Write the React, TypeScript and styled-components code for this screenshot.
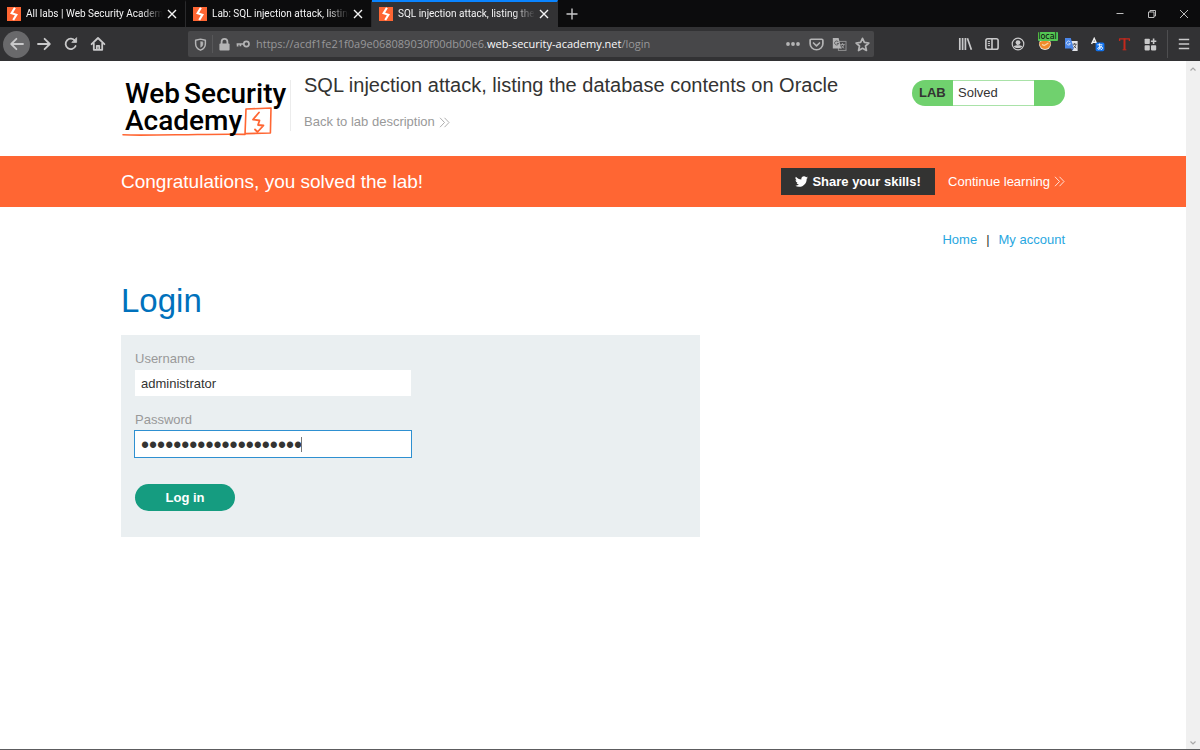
import React, { useState } from "react";
import styled, { createGlobalStyle } from "styled-components";

const GlobalStyle = createGlobalStyle`
  * { box-sizing: border-box; }
  body { margin: 0; background: #fff; font-family: "Liberation Sans", Arial, sans-serif; color: #333332; }
  button { border: 0; padding: 0; background: none; color: inherit; font: inherit; cursor: pointer; }
  a { text-decoration: none; }
  svg { display: block; flex: none; }
`;

const Window = styled.div`
  display: flex;
  flex-direction: column;
  min-height: 100vh;
  border-bottom: 1px solid #5c5c5e;
`;

/* ---------- browser chrome ---------- */

const TabStrip = styled.header`
  display: flex;
  height: 27px;
  background: #0c0c0d;
  color: #f4f4f5;
`;

const Tab = styled.div<{ $active?: boolean }>`
  display: flex;
  align-items: center;
  width: 186px;
  padding: 0 4px 1px 7px;
  border-top: 2px solid ${(p) => (p.$active ? "#0a84ff" : "transparent")};
  border-right: 1px solid ${(p) => (p.$active ? "#323234" : "#2a2a2c")};
  background: ${(p) => (p.$active ? "#323234" : "transparent")};
`;

const TabTitle = styled.span`
  flex: 1;
  min-width: 0;
  margin-left: 5px;
  overflow: hidden;
  white-space: nowrap;
  font: 10px/16px Roboto, "Noto Sans", sans-serif;
  mask-image: linear-gradient(to right, #000 84%, transparent);
`;

const TabClose = styled.button`
  display: flex;
  justify-content: center;
  width: 18px;
`;

const NewTab = styled.button`
  display: flex;
  align-items: center;
  justify-content: center;
  width: 27px;
  color: #c9c9ca;
`;

const WindowControls = styled.div`
  display: flex;
  margin-left: auto;
`;

const WindowButton = styled.button`
  display: flex;
  align-items: center;
  justify-content: center;
  width: 32px;
  color: #bdbdbd;
`;

const Toolbar = styled.nav`
  display: flex;
  align-items: center;
  height: 34px;
  padding: 0 1px 0 3px;
  background: #323234;
  color: #c9c9ca;
`;

const NavButton = styled.button<{ $round?: boolean }>`
  display: flex;
  align-items: center;
  justify-content: center;
  width: 27px;
  height: 27px;
  border-radius: 50%;
  background: ${(p) => (p.$round ? "#69696b" : "transparent")};
`;

const AddressBar = styled.div`
  display: flex;
  flex: 1;
  align-items: center;
  min-width: 0;
  height: 26px;
  margin: 0 78px 0 77px;
  padding: 0 4px 0 6px;
  border-radius: 2px;
  background: #474749;
  color: #b4b4b5;
`;

const SiteInfo = styled.div`
  display: flex;
  align-items: center;
  gap: 5px;
`;

const Divider = styled.span`
  width: 1px;
  height: 18px;
  background: #58585a;
`;

const Address = styled.div`
  flex: 1;
  min-width: 0;
  margin-left: 6px;
  overflow: hidden;
  white-space: nowrap;
  font: 11px/18px "Open Sans", "Noto Sans", sans-serif;
  color: #98989a;
`;

const Domain = styled.span`
  color: #f9f9fa;
`;

const PageActions = styled.div`
  display: flex;
  gap: 8px;
`;

const IconButton = styled.button`
  display: flex;
  align-items: center;
  justify-content: center;
`;

const Extensions = styled.div`
  display: flex;
  width: 212px;
  margin-right: 3px;
`;

const ExtensionButton = styled.button`
  position: relative;
  display: flex;
  flex: 1;
  align-items: center;
  justify-content: center;
  height: 26px;
`;

const ExtensionBadge = styled.span`
  position: absolute;
  top: 1px;
  left: 6px;
  width: 20px;
  border-radius: 1px;
  background: #53c653;
  color: #0c0c0d;
  font: 8px/9px "DejaVu Sans", sans-serif;
`;

const ToolbarDivider = styled(Divider)`
  height: 28px;
  background: #4e4e50;
`;

const MenuButton = styled(IconButton)`
  width: 30px;
  height: 26px;
  margin-left: 1px;
`;

/* ---------- page ---------- */

const Viewport = styled.div`
  display: flex;
  flex: 1;
`;

const Page = styled.div`
  flex: 1;
  min-width: 0;
`;

const ScrollTrack = styled.div`
  display: flex;
  flex-direction: column;
  justify-content: space-between;
  align-items: center;
  width: 14px;
  padding: 6px 0 4px;
  background: #f0f0f0;
  color: #a9a9a9;
`;

const Container = styled.div`
  display: flex;
  max-width: 944px;
  margin: 0 auto;
`;

const LabHeader = styled(Container)`
  align-items: flex-start;
  height: 95px;
  padding-top: 19px;
`;

const Logo = styled.a`
  position: relative;
  width: 170px;
  height: 51px;
  padding-left: 4px;
  border-right: 1px solid #ececec;
  color: #000;
  font: 500 28px/27px Roboto, sans-serif;
  white-space: nowrap;
`;

const LogoLine = styled.span`
  position: relative;
  display: flex;
  gap: 4px;
`;

const LogoMark = styled.svg`
  position: absolute;
  top: 26px;
  left: 0;
`;

const TitleBlock = styled.div`
  flex: 1;
  margin-left: 13px;
`;

const LabTitle = styled.h2`
  margin: 0;
  font-size: 20px;
  line-height: 10px;
  font-weight: 400;
`;

const BackLink = styled.a`
  display: inline-flex;
  align-items: center;
  gap: 4px;
  margin-top: 24px;
  color: #999;
  font-size: 13px;
  line-height: 16px;
`;

const LabStatus = styled.div`
  display: flex;
  width: 153px;
  height: 26px;
  overflow: hidden;
  border-radius: 13px;
  background: #70d16e;
  font-size: 13px;
  line-height: 26px;
`;

const StatusLabel = styled.strong`
  width: 41px;
  padding-left: 7px;
  font-size: 13px;
`;

const StatusValue = styled.span`
  width: 81px;
  padding-left: 5px;
  border: solid #a9e2a8;
  border-width: 1px 0;
  background: #fff;
  line-height: 24px;
`;

const Banner = styled.section`
  background: #ff6633;
  color: #fff;
`;

const BannerRow = styled(Container)`
  align-items: center;
  height: 51px;
`;

const BannerTitle = styled.h4`
  flex: 1;
  margin: 0;
  font-size: 19px;
  font-weight: 400;
`;

const ShareButton = styled.button`
  display: flex;
  align-items: center;
  justify-content: center;
  gap: 4px;
  width: 154px;
  height: 27px;
  margin-right: 13px;
  background: #333332;
  font-size: 13px;
  font-weight: 700;
`;

const ContinueLink = styled.a`
  display: flex;
  align-items: center;
  gap: 4px;
  color: #fff;
  font-size: 13px;
`;

const AccountNav = styled(Container)`
  justify-content: flex-end;
  gap: 9px;
  padding-top: 25px;
  font-size: 13px;
  line-height: 16px;
`;

const AccountLink = styled.a`
  color: #29a7df;
`;

const Main = styled(Container)`
  flex-direction: column;
  padding-top: 32px;
`;

const Heading = styled.h1`
  margin: 0 0 13px;
  color: #0071bc;
  font-size: 33px;
  line-height: 42px;
  font-weight: 400;
`;

const LoginForm = styled.form`
  display: flex;
  flex-direction: column;
  align-items: flex-start;
  width: 579px;
  max-width: 100%;
  padding: 16px 14px 26px;
  background: #eaeff1;
`;

const Label = styled.label`
  margin-bottom: 2px;
  color: #999;
  font-size: 13px;
  line-height: 16px;
`;

const Field = styled.div`
  position: relative;
  display: flex;
  margin: 0 -1px 15px;
`;

const TextInput = styled.input`
  width: 278px;
  height: 28px;
  padding: 0 6px;
  border: 1px solid #eaeff1;
  outline: 0;
  background: #fff;
  color: #333332;
  font: 13px "Liberation Sans", Arial, sans-serif;
`;

const PasswordInput = styled(TextInput)`
  padding-top: 2px;
  border-color: #2e90d1;
  font-size: 23px;
  caret-color: transparent;
`;

const Caret = styled.span`
  position: absolute;
  top: 7px;
  left: 167px;
  width: 1px;
  height: 15px;
  background: #777;
`;

const LoginButton = styled.button`
  width: 100px;
  height: 27px;
  margin-top: 11px;
  border-radius: 14px;
  background: #159c80;
  color: #fff;
  font-size: 13px;
  font-weight: 700;
`;

/* ---------- drawings ---------- */

const Favicon = () => (
  <svg width="14" height="14" viewBox="0 0 14 14">
    <rect width="14" height="14" fill="#ff6633" />
    <path d="M7.9 0.8 L4.6 6.2 L9.4 7.8 L6.2 13" fill="none" stroke="#fff" strokeWidth="2.1" />
  </svg>
);

const Cross = ({ size, width }: { size: number; width: number }) => (
  <svg width={size} height={size} viewBox="0 0 10 10" fill="none" stroke="currentColor" strokeWidth={width}>
    <path d="M1 1 L9 9 M9 1 L1 9" />
  </svg>
);

const Line = ({ size = 16, children }: { size?: number; children: React.ReactNode }) => (
  <svg
    width={size}
    height={size}
    viewBox="0 0 16 16"
    fill="none"
    stroke="currentColor"
    strokeWidth="1.8"
    strokeLinecap="round"
    strokeLinejoin="round"
  >
    {children}
  </svg>
);

const Chevrons = () => (
  <svg width="11" height="11" viewBox="0 0 11 11" fill="none" stroke="currentColor" strokeWidth="0.8">
    <path d="M1 0.8 L5.5 5.5 L1 10.2 M5.5 0.8 L10 5.5 L5.5 10.2" />
  </svg>
);

const Bird = () => (
  <svg width="13" height="13" viewBox="0 0 24 24" fill="currentColor">
    <path d="M23.95 4.57a10 10 0 0 1-2.82.77 4.96 4.96 0 0 0 2.16-2.72c-.95.55-2 .95-3.13 1.18a4.92 4.92 0 0 0-8.38 4.48C7.69 8.09 4.07 6.13 1.64 3.16a4.93 4.93 0 0 0 1.52 6.57 4.9 4.9 0 0 1-2.23-.61v.06a4.92 4.92 0 0 0 3.95 4.83 5 5 0 0 1-2.21.08 4.94 4.94 0 0 0 4.6 3.42A9.87 9.87 0 0 1 0 19.54a14 14 0 0 0 7.55 2.21c9.05 0 14-7.5 14-13.98 0-.21 0-.42-.02-.63a9.94 9.94 0 0 0 2.46-2.55z" />
  </svg>
);

const ShieldIcon = () => (
  <Line size={13}>
    <path d="M8 1.4 L14 2.8 V7 C14 11 11.5 13.6 8 15 C4.5 13.6 2 11 2 7 V2.8 Z" />
    <path d="M8.2 4.6 V11.4 C10 10.6 11 9 11 7 V5.2 Z" fill="currentColor" strokeWidth="0.6" />
  </Line>
);

const LockIcon = () => (
  <svg width="13" height="13" viewBox="0 0 13 13" fill="currentColor">
    <path d="M3.6 6 V3.8 a2.9 2.9 0 0 1 5.8 0 V6" fill="none" stroke="currentColor" strokeWidth="1.8" />
    <rect x="1.4" y="5.4" width="10.2" height="7.2" rx="1" />
  </svg>
);

const KeyIcon = () => (
  <svg width="14" height="10" viewBox="0 0 14 10" fill="none" stroke="currentColor" strokeWidth="1.7">
    <circle cx="10.4" cy="5" r="2.6" />
    <path d="M7.8 5 H0.6 M1.6 5 V7.4 M4.4 5 V7.2" />
  </svg>
);

const TranslateIcon = () => (
  <svg width="15" height="15" viewBox="0 0 15 15">
    <rect x="6.4" y="4.4" width="7.6" height="9" fill="none" stroke="#8f8f91" />
    <path d="M8.4 7.4 H12.6 M10.5 6.2 V7.4 M12 7.4 C11.6 9.4 10.4 10.6 8.8 11.4 M9.2 8.6 L12.2 11.4" fill="none" stroke="#a9a9aa" strokeWidth="0.9" />
    <path d="M0.8 1 H6.6 L9.2 11.4 H0.8 Z" fill="#b4b4b5" />
    <path d="M6.4 5 A2 2 0 1 0 6.6 6.4 H4.8" fill="none" stroke="#5a5a5c" />
  </svg>
);

const LibraryIcon = () => (
  <svg width="15" height="14" viewBox="0 0 15 14" fill="none" stroke="currentColor" strokeWidth="1.7">
    <path d="M1.8 1 V13 M4.6 1 V13 M7.4 1 V13 M9.4 1.2 L13.4 12.8" />
  </svg>
);

const SidebarIcon = () => (
  <svg width="14" height="14" viewBox="0 0 14 14" fill="none" stroke="currentColor" strokeWidth="1.6">
    <rect x="0.9" y="1.7" width="12.2" height="10.6" rx="1.8" />
    <path d="M7 1.7 V12.3" />
    <path d="M2.8 4.6 H5 M2.8 6.6 H5 M2.8 8.6 H5" strokeWidth="1" />
  </svg>
);

const ProfileIcon = () => (
  <svg width="14" height="14" viewBox="0 0 14 14" fill="none" stroke="currentColor" strokeWidth="1.2">
    <circle cx="7" cy="7" r="5.8" />
    <circle cx="7" cy="5.6" r="2.4" fill="currentColor" stroke="none" />
    <path d="M2.8 9.4 C4.4 8 9.6 8 11.2 9.4 C9.8 11.6 4.2 11.6 2.8 9.4 Z" fill="currentColor" stroke="none" />
  </svg>
);

const FoxIcon = () => (
  <svg width="14" height="14" viewBox="0 0 14 14">
    <circle cx="7" cy="7" r="6" fill="#e8e2d8" />
    <path d="M1.2 6 C3 3 11 3 12.8 6 C12.4 9 10 12 7 12 C4 12 1.6 9 1.2 6 Z" fill="#ef8a2b" />
    <path d="M4 7.4 L6.2 8.6 L10.4 6" fill="none" stroke="#f9d3a2" strokeWidth="1.2" />
  </svg>
);

const GoogleTranslateIcon = () => (
  <svg width="15" height="15" viewBox="0 0 15 15">
    <path d="M5 4 H13.6 V14 H8.4 Z" fill="#e3e4e8" />
    <path d="M8.4 7.2 H12.6 M10.6 6 V7.2 M12 7.2 C11.4 9.4 10.6 10.2 9.2 11 M9.6 8.6 L12.2 11.2" fill="none" stroke="#55565c" />
    <path d="M1 1 H6.8 L9.6 11.4 H1 Z" fill="#4a86e8" />
    <path d="M6.2 5 A2 2 0 1 0 6.4 6.6 H4.6" fill="none" stroke="#cfe0fb" strokeWidth="0.9" />
    <path d="M7.2 11.4 H9.6 L8.6 13.6 Z" fill="#2b5bb8" />
  </svg>
);

const PageTranslateIcon = () => (
  <svg width="15" height="15" viewBox="0 0 15 15">
    <path d="M1.6 7 L4.2 1.4 L6.8 7 M2.6 5.2 H5.8" fill="none" stroke="#f0f0f0" strokeWidth="1.4" />
    <rect x="5.6" y="5.4" width="8.8" height="8.8" rx="1.6" fill="#1273ee" />
    <path d="M7.4 7.8 H12.4 M9.6 6.4 C9.4 9 9.6 10.6 10.2 12.4 M11.6 8.8 C10.8 11 9.4 12.6 8 12.2 C6.8 11 10 8.8 12 10 C13.2 11 12.4 12.4 11 12.6" fill="none" stroke="#fff" strokeWidth="0.9" />
  </svg>
);

const LetterTIcon = () => (
  <svg width="13" height="14" viewBox="0 0 13 14" fill="none" stroke="#c5281c">
    <path d="M1.4 1.8 H11.6 M1.6 1.4 V4 M11.4 1.4 V4" strokeWidth="1.3" />
    <path d="M6.5 1.4 V12.8" strokeWidth="2" />
    <path d="M4.6 12.8 H8.4" strokeWidth="1" />
  </svg>
);

const AddonsIcon = () => (
  <svg width="13" height="13" viewBox="0 0 13 13" fill="currentColor">
    <rect x="0.6" y="0.8" width="5.2" height="5.2" rx="0.8" />
    <rect x="0.6" y="7.2" width="5.2" height="5.2" rx="0.8" />
    <rect x="7" y="7.2" width="5.2" height="5.2" rx="0.8" />
    <path d="M9.6 0.6 V6 M6.9 3.3 H12.3" stroke="currentColor" strokeWidth="1.6" />
  </svg>
);

const tabs = [
  "All labs | Web Security Academy",
  "Lab: SQL injection attack, listing the",
  "SQL injection attack, listing the database",
];

const extensions = [
  { name: "Library", icon: <LibraryIcon /> },
  { name: "Sidebars", icon: <SidebarIcon /> },
  { name: "Account", icon: <ProfileIcon /> },
  { name: "Proxy", icon: <FoxIcon />, badge: "local" },
  { name: "Translate", icon: <GoogleTranslateIcon /> },
  { name: "Translate page", icon: <PageTranslateIcon /> },
  { name: "Text tool", icon: <LetterTIcon /> },
  { name: "Add-ons", icon: <AddonsIcon /> },
];

export default function App() {
  const [username, setUsername] = useState("administrator");
  const [password, setPassword] = useState("x".repeat(20));

  return (
    <Window>
      <GlobalStyle />
      <TabStrip>
        {tabs.map((title, i) => (
          <Tab key={title} $active={i === 2}>
            <Favicon />
            <TabTitle>{title}</TabTitle>
            <TabClose aria-label="Close tab">
              <Cross size={10} width={1.4} />
            </TabClose>
          </Tab>
        ))}
        <NewTab aria-label="New tab">
          <svg width="12" height="12" viewBox="0 0 12 12" stroke="currentColor" strokeWidth="1.4">
            <path d="M6 0.5 V11.5 M0.5 6 H11.5" />
          </svg>
        </NewTab>
        <WindowControls>
          <WindowButton aria-label="Minimize">
            <svg width="8" height="8" viewBox="0 0 8 8" stroke="currentColor">
              <path d="M0.5 3.5 H7.5" />
            </svg>
          </WindowButton>
          <WindowButton aria-label="Restore">
            <svg width="8" height="8" viewBox="0 0 8 8" fill="none" stroke="currentColor">
              <path d="M0.5 2 H6 V7.5 H0.5 Z M2 2 V0.5 H7.5 V6 H6" />
            </svg>
          </WindowButton>
          <WindowButton aria-label="Close">
            <Cross size={10} width={1} />
          </WindowButton>
        </WindowControls>
      </TabStrip>

      <Toolbar aria-label="Browser toolbar">
        <NavButton $round aria-label="Back">
          <Line><path d="M14 8 H2.4 M7.4 2.8 L2.2 8 L7.4 13.2" /></Line>
        </NavButton>
        <NavButton aria-label="Forward">
          <Line><path d="M2 8 H13.6 M8.6 2.8 L13.8 8 L8.6 13.2" /></Line>
        </NavButton>
        <NavButton aria-label="Reload">
          <Line>
            <path d="M12.6 10 A5.2 5.2 0 1 1 12 4.8" />
            <path d="M13.6 2 V6.4 H9.2 Z" fill="currentColor" strokeWidth="0.8" />
          </Line>
        </NavButton>
        <NavButton aria-label="Home">
          <Line>
            <path d="M1.6 8.2 L8 2 L14.4 8.2" />
            <path d="M3.8 7.4 V13.8 H12.2 V7.4 M6.8 13.6 V9.8 H9.2 V13.6" />
          </Line>
        </NavButton>

        <AddressBar>
          <SiteInfo>
            <ShieldIcon />
            <Divider />
            <LockIcon />
            <KeyIcon />
          </SiteInfo>
          <Address role="textbox" aria-label="Address">
            https://acdf1fe21f0a9e068089030f00db00e6.<Domain>web-security-academy.net</Domain>/login
          </Address>
          <PageActions>
            <IconButton aria-label="Page actions">
              <svg width="16" height="16" viewBox="0 0 16 16" fill="currentColor">
                <circle cx="3" cy="8" r="1.9" />
                <circle cx="8" cy="8" r="1.9" />
                <circle cx="13" cy="8" r="1.9" />
              </svg>
            </IconButton>
            <IconButton aria-label="Save to Pocket">
              <Line size={15}>
                <path d="M2.4 2.4 H13.6 Q14.8 2.4 14.8 3.6 V7.2 A6.8 6.4 0 0 1 1.2 7.2 V3.6 Q1.2 2.4 2.4 2.4 Z" />
                <path d="M4.8 6.4 L8 9.4 L11.2 6.4" />
              </Line>
            </IconButton>
            <IconButton aria-label="Translate this page">
              <TranslateIcon />
            </IconButton>
            <IconButton aria-label="Bookmark">
              <Line size={15}>
                <path d="M8 1.4 L10 5.8 L14.8 6.4 L11.2 9.6 L12.2 14.4 L8 12 L3.8 14.4 L4.8 9.6 L1.2 6.4 L6 5.8 Z" />
              </Line>
            </IconButton>
          </PageActions>
        </AddressBar>

        <Extensions>
          {extensions.map((e) => (
            <ExtensionButton key={e.name} aria-label={e.name}>
              {e.icon}
              {e.badge && <ExtensionBadge>{e.badge}</ExtensionBadge>}
            </ExtensionButton>
          ))}
        </Extensions>
        <ToolbarDivider />
        <MenuButton aria-label="Menu">
          <svg width="12" height="12" viewBox="0 0 12 12" stroke="currentColor" strokeWidth="1.5">
            <path d="M0.8 1.5 H11.2 M0.8 6 H11.2 M0.8 10.5 H11.2" />
          </svg>
        </MenuButton>
      </Toolbar>

      <Viewport>
        <Page>
          <LabHeader as="header">
            <Logo href="#">
              <LogoMark width="152" height="32" viewBox="0 0 152 32" fill="none" stroke="#ff6633" strokeLinecap="round" strokeLinejoin="round">
                <path d="M2 28.8 C20 29.6 40 28.6 60 28.8 C80 28.6 100 28 124 28.4 L125 3 L150 2 L149.4 27 L125 27.6" strokeWidth="1.6" />
                <path d="M138 6.5 L132 13.5 L138.5 14.5 L137 19 L142.5 19.5 L136.5 26 L134 23.5" strokeWidth="1.8" />
              </LogoMark>
              <LogoLine>
                <span>Web</span>
                <span>Security</span>
              </LogoLine>
              <LogoLine>Academy</LogoLine>
            </Logo>
            <TitleBlock>
              <LabTitle>SQL injection attack, listing the database contents on Oracle</LabTitle>
              <BackLink href="#">
                Back to lab description <Chevrons />
              </BackLink>
            </TitleBlock>
            <LabStatus>
              <StatusLabel>LAB</StatusLabel>
              <StatusValue>Solved</StatusValue>
            </LabStatus>
          </LabHeader>

          <Banner>
            <BannerRow>
              <BannerTitle>Congratulations, you solved the lab!</BannerTitle>
              <ShareButton>
                <Bird /> Share your skills!
              </ShareButton>
              <ContinueLink href="#">
                Continue learning <Chevrons />
              </ContinueLink>
            </BannerRow>
          </Banner>

          <AccountNav as="nav">
            <AccountLink href="#">Home</AccountLink>
            <span>|</span>
            <AccountLink href="#">My account</AccountLink>
          </AccountNav>

          <Main as="main">
            <Heading>Login</Heading>
            <LoginForm onSubmit={(e) => e.preventDefault()}>
              <Label htmlFor="username">Username</Label>
              <Field>
                <TextInput id="username" value={username} onChange={(e) => setUsername(e.target.value)} />
              </Field>
              <Label htmlFor="password">Password</Label>
              <Field>
                <PasswordInput id="password" type="password" value={password} onChange={(e) => setPassword(e.target.value)} />
                <Caret />
              </Field>
              <LoginButton type="submit">Log in</LoginButton>
            </LoginForm>
          </Main>
        </Page>
        <ScrollTrack aria-hidden="true">
          <svg width="6" height="4" viewBox="0 0 6 4" fill="none" stroke="currentColor" strokeWidth="1.2">
            <path d="M0.5 3.5 L3 1 L5.5 3.5" />
          </svg>
          <svg width="6" height="4" viewBox="0 0 6 4" fill="none" stroke="currentColor" strokeWidth="1.2">
            <path d="M0.5 0.5 L3 3 L5.5 0.5" />
          </svg>
        </ScrollTrack>
      </Viewport>
    </Window>
  );
}
